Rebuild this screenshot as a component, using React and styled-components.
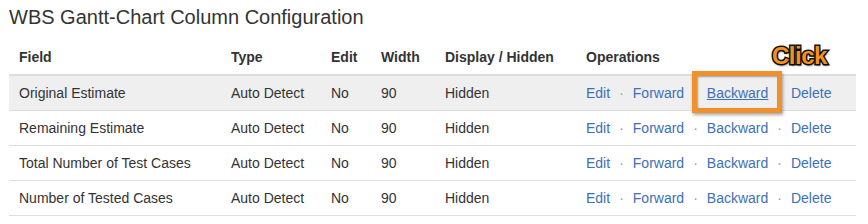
import React from "react"
import styled, { createGlobalStyle } from "styled-components"

const GlobalStyle = createGlobalStyle`
  body {
    margin: 0;
    background: #fff;
    font-family: "Liberation Sans", Arial, sans-serif;
    color: #333;
  }
`

const Page = styled.div`
  position: relative;
  padding: 0 12px 0 9px;
  width: 868px;
  box-sizing: border-box;
`

const Title = styled.h2`
  margin: 0;
  padding-top: 5px;
  font-size: 20px;
  font-weight: normal;
  line-height: 24px;
  color: #333;
`

const Table = styled.table`
  margin-top: 11px;
  width: 847px;
  table-layout: fixed;
  border-collapse: collapse;
  font-size: 14px;
  line-height: 18px;
`

const Th = styled.th`
  text-align: left;
  font-weight: bold;
  padding: 8px 10px;
  border-bottom: 2px solid #ddd;
  white-space: nowrap;
  width: ${(p) => p.$w}px;
`

const Row = styled.tr`
  background: ${(p) => (p.$highlight ? "#efefef" : "transparent")};
`

const Td = styled.td`
  padding: 8px 10px;
  border-bottom: 1px solid #ddd;
  white-space: nowrap;
`

const Ops = styled.div`
  display: flex;
  align-items: center;
`

const OpLink = styled.a`
  color: #3d70b8;
  text-decoration: ${(p) => (p.$underline ? "underline" : "none")};
  cursor: pointer;
`

const Sep = styled.span`
  color: ${(p) => (p.$ghost ? "transparent" : "#999")};
  margin: 0 9px;
`

const Callout = styled.div`
  position: absolute;
  left: 692px;
  top: 71px;
  width: 90px;
  height: 42px;
  box-sizing: border-box;
  border: 5px solid #f0902e;
  box-shadow: 1px 2px 3px rgba(0, 0, 0, 0.35),
    inset 1px 1px 2px rgba(0, 0, 0, 0.35);
  pointer-events: none;
`

const ClickLabel = styled.div`
  position: absolute;
  left: 772px;
  top: 42px;
  font-family: "Liberation Sans", Arial, sans-serif;
  font-size: 24px;
  font-weight: bold;
  line-height: 28px;
  color: #f5901e;
  -webkit-text-stroke: 3px #111;
  paint-order: stroke fill;
  text-shadow: 1px 2px 2px rgba(0, 0, 0, 0.5);
  letter-spacing: -0.5px;
`

const columns = [
  { label: "Field", w: 192 },
  { label: "Type", w: 80 },
  { label: "Edit", w: 30 },
  { label: "Width", w: 44 },
  { label: "Display / Hidden", w: 121 },
  { label: "Operations", w: 260 },
]

const rows = [
  "Original Estimate",
  "Remaining Estimate",
  "Total Number of Test Cases",
  "Number of Tested Cases",
]

const ops = ["Edit", "Forward", "Backward", "Delete"]

const App = () => {
  return (
    <>
      <GlobalStyle />
      <Page>
        <Title>WBS Gantt-Chart Column Configuration</Title>
        <Table>
          <thead>
            <tr>
              {columns.map((c) => (
                <Th key={c.label} $w={c.w}>
                  {c.label}
                </Th>
              ))}
            </tr>
          </thead>
          <tbody>
            {rows.map((field, i) => (
              <Row key={field} $highlight={i === 0}>
                <Td>{field}</Td>
                <Td>Auto Detect</Td>
                <Td>No</Td>
                <Td>90</Td>
                <Td>Hidden</Td>
                <Td>
                  <Ops>
                    {ops.map((op, j) => (
                      <React.Fragment key={op}>
                        {j > 0 && <Sep $ghost={i === 0 && j > 1}>·</Sep>}
                        <OpLink $underline={i === 0 && op === "Backward"}>{op}</OpLink>
                      </React.Fragment>
                    ))}
                  </Ops>
                </Td>
              </Row>
            ))}
          </tbody>
        </Table>
        <Callout />
        <ClickLabel>Click</ClickLabel>
      </Page>
    </>
  )
}

export default App
